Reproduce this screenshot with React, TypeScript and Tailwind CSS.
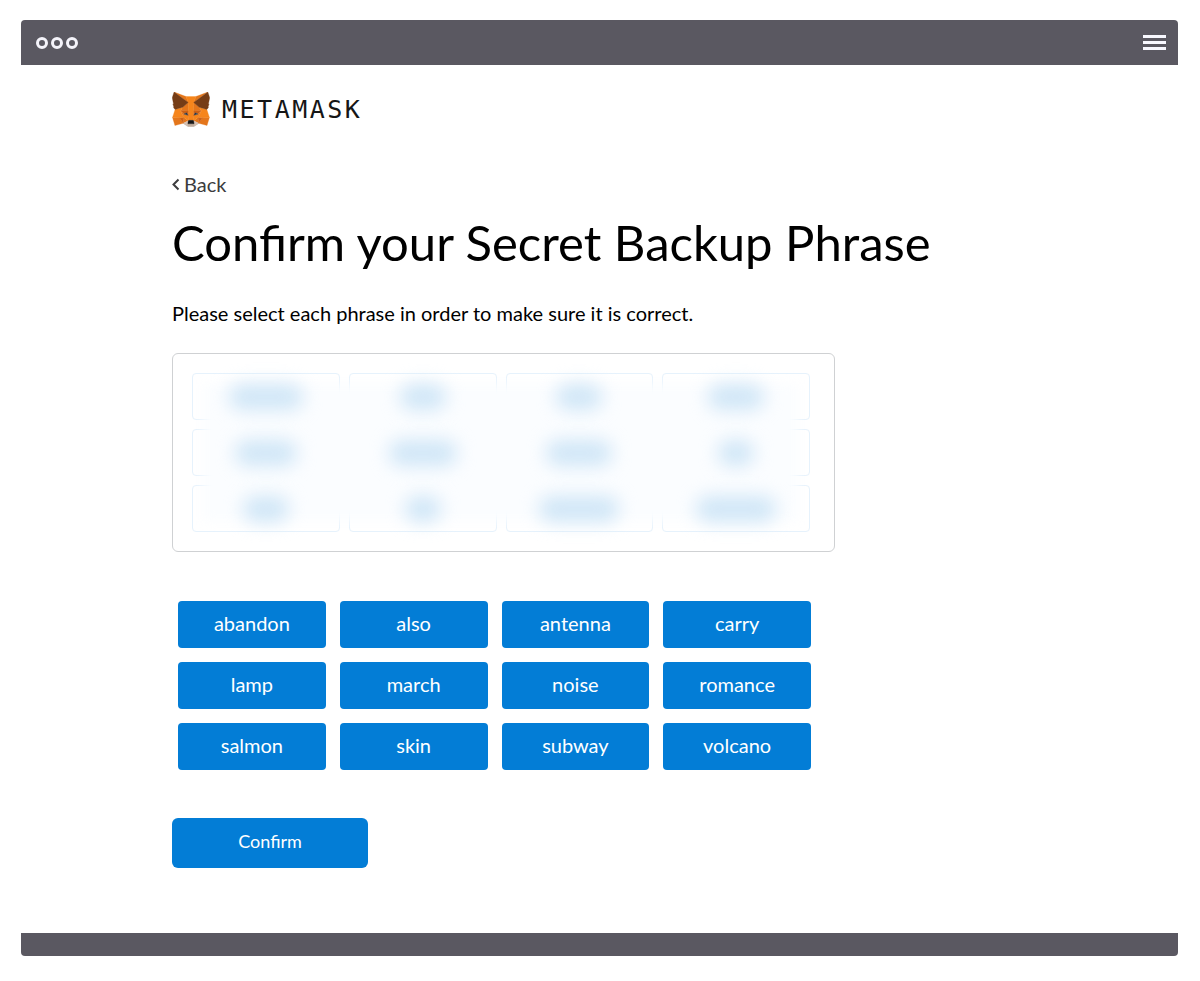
import { useState } from "react";

const words = [
  "abandon",
  "also",
  "antenna",
  "carry",
  "lamp",
  "march",
  "noise",
  "romance",
  "salmon",
  "skin",
  "subway",
  "volcano",
];

// widths of the blurred words inside the phrase box
const hiddenWords = [74, 46, 46, 56, 62, 68, 66, 36, 46, 36, 80, 80];

const foxShapes = [
  { fill: "#e2761b", points: "274.1,35.5 174.6,109.4 193,65.8" },
  { fill: "#e4761b", points: "44.4,35.5 143.1,110.1 125.6,65.8" },
  { fill: "#e4761b", points: "238.3,206.8 211.8,247.4 268.5,263 284.8,207.7" },
  { fill: "#e4761b", points: "33.9,207.7 50.1,263 106.8,247.4 80.3,206.8" },
  { fill: "#e4761b", points: "103.6,138.2 87.8,162.1 144.1,164.6 142.1,104.1" },
  { fill: "#e4761b", points: "214.9,138.2 175.9,103.4 174.6,164.6 230.8,162.1" },
  { fill: "#e4761b", points: "106.8,247.4 140.6,230.9 111.4,208.1" },
  { fill: "#e4761b", points: "177.9,230.9 211.8,247.4 207.1,208.1" },
  { fill: "#d7c1b3", points: "211.8,247.4 177.9,230.9 180.6,253 180.3,262.3" },
  { fill: "#d7c1b3", points: "106.8,247.4 138.3,262.3 138.1,253 140.6,230.9" },
  { fill: "#cd6116", points: "106.8,247.4 111.6,206.8 80.3,207.7" },
  { fill: "#cd6116", points: "207,206.8 211.8,247.4 238.3,207.7" },
  { fill: "#cd6116", points: "230.8,162.1 174.6,164.6 179.8,193.5 188.1,176.1 208.1,185.2" },
  { fill: "#cd6116", points: "110.6,185.2 130.6,176.1 138.8,193.5 144.1,164.6 87.8,162.1" },
  { fill: "#e4751f", points: "87.8,162.1 111.4,208.1 110.6,185.2" },
  { fill: "#e4751f", points: "208.1,185.2 207.1,208.1 230.8,162.1" },
  { fill: "#e4751f", points: "144.1,164.6 138.8,193.5 145.4,227.6 146.9,182.7" },
  { fill: "#e4751f", points: "174.6,164.6 171.9,182.6 173.1,227.6 179.8,193.5" },
  { fill: "#f6851b", points: "179.8,193.5 173.1,227.6 177.9,230.9 207.1,208.1 208.1,185.2" },
  { fill: "#f6851b", points: "110.6,185.2 111.4,208.1 140.6,230.9 145.4,227.6 138.8,193.5" },
  { fill: "#f6851b", points: "267.2,153.5 214.9,138.2 230.8,162.1 207.1,208.1 238.3,207.7 284.8,207.7" },
  { fill: "#f6851b", points: "103.6,138.2 51.3,153.5 33.9,207.7 80.3,207.7 111.4,208.1 87.8,162.1" },
  {
    fill: "#f6851b",
    points:
      "174.6,164.6 177.9,106.9 193.1,65.8 125.6,65.8 140.6,106.9 144.1,164.6 145.3,182.8 145.4,227.6 173.1,227.6 173.3,182.8",
  },
  {
    fill: "#c0ad9e",
    points:
      "180.3,262.3 180.6,253 178.1,250.8 140.4,250.8 138.1,253 138.3,262.3 106.8,247.4 117.8,256.4 140.1,271.9 178.4,271.9 200.8,256.4 211.8,247.4",
  },
  {
    fill: "#161616",
    points: "177.9,230.9 173.1,227.6 145.4,227.6 140.6,230.9 138.1,253 140.4,250.8 178.1,250.8 180.6,253",
  },
  {
    fill: "#763d16",
    points:
      "278.3,114.2 286.8,73.4 274.1,35.5 177.9,106.9 214.9,138.2 267.2,153.5 278.8,140 273.8,136.4 281.8,129.1 275.6,124.3 283.6,118.2",
  },
  {
    fill: "#763d16",
    points:
      "31.8,73.4 40.3,114.2 34.9,118.2 42.9,124.3 36.8,129.1 44.8,136.4 39.8,140 51.3,153.5 103.6,138.2 140.6,106.9 44.4,35.5",
  },
  { fill: "#233447", points: "138.8,193.5 110.6,185.2 130.5,176.1" },
  { fill: "#233447", points: "179.7,193.5 188,176.1 208,185.2" },
];

function FoxLogo() {
  return (
    <svg viewBox="31 35 257 238" className="h-[35px] w-[38px]" aria-hidden="true">
      {foxShapes.map((shape) => (
        <polygon
          key={shape.points}
          fill={shape.fill}
          stroke={shape.fill}
          strokeWidth="2"
          strokeLinejoin="round"
          points={shape.points}
        />
      ))}
    </svg>
  );
}

function TitleBar() {
  return (
    <header className="flex h-[45px] items-center justify-between rounded-t-[4px] bg-[#5a5861] pr-3 pl-[15px]">
      <div className="flex gap-[3px]">
        <span className="size-3 rounded-full border-3 border-[#f4f3fa]" />
        <span className="size-3 rounded-full border-3 border-[#f4f3fa]" />
        <span className="size-3 rounded-full border-3 border-[#f4f3fa]" />
      </div>
      <button type="button" aria-label="Menu" className="flex w-[23px] flex-col gap-[3px]">
        <span className="h-[3px] w-full bg-[#f8f8ff]" />
        <span className="h-[3px] w-full bg-[#f8f8ff]" />
        <span className="h-[3px] w-full bg-[#f8f8ff]" />
      </button>
    </header>
  );
}

function PhraseBox() {
  return (
    <div className="relative mt-7 max-w-[663px] rounded-[6px] border border-[#cfd1d3] py-[19px] pr-6 pl-[19px]">
      <div className="grid grid-cols-4 gap-[9px]">
        {hiddenWords.map((_, index) => (
          <div key={index} className="h-[47px] rounded-[4px] border border-[#e6f2fc]" />
        ))}
      </div>
      {/* Haze over the words */}
      <div className="absolute inset-y-[30px] right-[36px] left-[30px] bg-[#fbfdff] blur-[6px]" />
      <div className="absolute inset-0 grid grid-cols-4 gap-[9px] py-[19px] pr-6 pl-[19px]">
        {hiddenWords.map((width, index) => (
          <div key={index} className="flex items-center justify-center">
            <span className="h-[26px] rounded-full bg-[#d0e6f7] blur-[9px]" style={{ width }} />
          </div>
        ))}
      </div>
    </div>
  );
}

export default function App() {
  const [selected, setSelected] = useState<string[]>([]);

  const toggleWord = (word: string) => {
    setSelected((prev) => (prev.includes(word) ? prev.filter((w) => w !== word) : [...prev, word]));
  };

  return (
    <div className="min-h-screen bg-white py-5 pr-[22px] pl-[21px] font-['Lato',sans-serif] text-black">
      <TitleBar />

      <main className="px-[151px] pt-[27px] pb-[65px]">
        <div className="flex items-center gap-3">
          <FoxLogo />
          <span className="font-['DejaVu_Sans_Mono',monospace] text-[25px] leading-[35px] tracking-widest text-[#161616]">
            METAMASK
          </span>
        </div>

        <a href="#" className="mt-[45px] flex w-fit items-center gap-1 text-[20px] leading-6 text-[#3c3c3e]">
          <svg viewBox="0 0 8 14" className="h-[14px] w-2" fill="none" stroke="currentColor" strokeWidth="2">
            <path d="M6.500 2.500 1.500 7.500l5 5" />
          </svg>
          Back
        </a>

        <h1 className="mt-[18px] text-[49px] leading-[56px]">Confirm your Secret Backup Phrase</h1>

        <p className="mt-[31px] text-[20px] leading-6">Please select each phrase in order to make sure it is correct.</p>

        <PhraseBox />

        <div className="mt-[49px] ml-[6px] grid max-w-[633px] grid-cols-4 gap-[14px]">
          {words.map((word) => (
            <button
              key={word}
              type="button"
              onClick={() => toggleWord(word)}
              aria-pressed={selected.includes(word)}
              className="h-[47px] rounded-[4px] bg-[#037dd6] pb-[3px] text-[20px] text-white"
            >
              {word}
            </button>
          ))}
        </div>

        <button
          type="button"
          className="mt-12 h-[50px] w-[196px] rounded-[6px] bg-[#037dd6] pb-[3px] text-[18px] text-white"
        >
          Confirm
        </button>
      </main>

      <footer className="h-[23px] rounded-b-[4px] bg-[#5a5861]" />
    </div>
  );
}
